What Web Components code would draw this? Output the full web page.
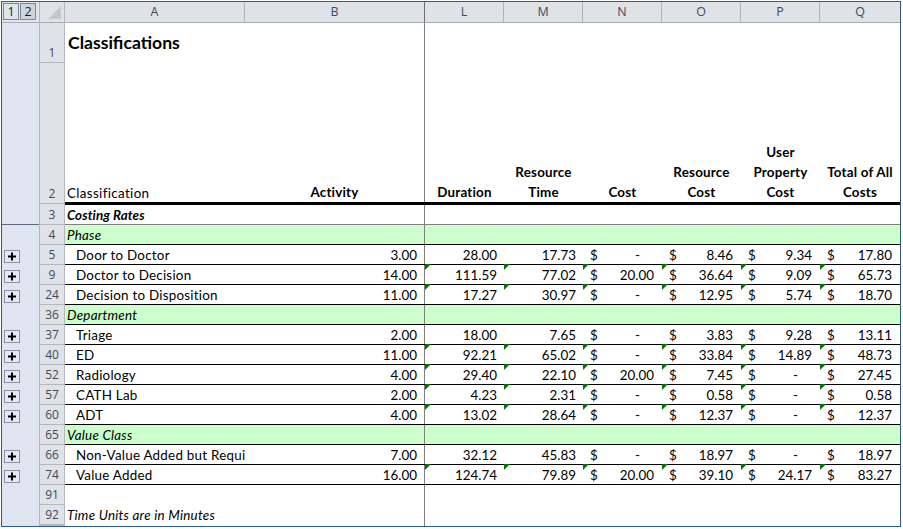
<!DOCTYPE html>
<html>
<head>
<meta charset="utf-8">
<title>Classifications</title>
<style>
  html, body { margin: 0; padding: 0; background: #fff; }
  body { font-family: Lato, "Liberation Sans", sans-serif; font-size: 13.4px; color: #000; }
</style>
</head>
<body>
<xl-sheet>
  <xl-colhead></xl-colhead>
  <xl-row num="1" h="40" kind="title" noline>Classifications</xl-row>
  <xl-row num="2" h="141" kind="head" noline activity="Activity" vals="Duration|Resource/Time|Cost|Resource/Cost|User/Property/Cost|Total of All/Costs">Classification</xl-row>
  <xl-row num="3" h="21" kind="rates" freeze>Costing Rates</xl-row>
  <xl-row num="4" kind="group">Phase</xl-row>
  <xl-row num="5" kind="sub" plus activity="3.00" vals="28.00|17.73|-|8.46|9.34|17.80">Door to Doctor</xl-row>
  <xl-row num="9" kind="sub" plus flag activity="14.00" vals="111.59|77.02|20.00|36.64|9.09|65.73">Doctor to Decision</xl-row>
  <xl-row num="24" kind="sub" plus flag activity="11.00" vals="17.27|30.97|-|12.95|5.74|18.70">Decision to Disposition</xl-row>
  <xl-row num="36" kind="group">Department</xl-row>
  <xl-row num="37" kind="sub" plus activity="2.00" vals="18.00|7.65|-|3.83|9.28|13.11">Triage</xl-row>
  <xl-row num="40" kind="sub" plus flag activity="11.00" vals="92.21|65.02|-|33.84|14.89|48.73">ED</xl-row>
  <xl-row num="52" kind="sub" plus flag activity="4.00" vals="29.40|22.10|20.00|7.45|-|27.45">Radiology</xl-row>
  <xl-row num="57" kind="sub" plus flag activity="2.00" vals="4.23|2.31|-|0.58|-|0.58">CATH Lab</xl-row>
  <xl-row num="60" kind="sub" plus flag activity="4.00" vals="13.02|28.64|-|12.37|-|12.37">ADT</xl-row>
  <xl-row num="65" kind="group">Value Class</xl-row>
  <xl-row num="66" kind="sub" plus activity="7.00" vals="32.12|45.83|-|18.97|-|18.97">Non-Value Added but Required</xl-row>
  <xl-row num="74" kind="sub" plus flag activity="16.00" vals="124.74|79.89|20.00|39.10|24.17|83.27">Value Added</xl-row>
  <xl-row num="91" noline></xl-row>
  <xl-row num="92" kind="note" noline>Time Units are in Minutes</xl-row>
  <xl-row h="1" noline></xl-row>
</xl-sheet>

<script>
const COLS = "180px 180px 79px 79px 79px 79px 79px 80px";

class XlSheet extends HTMLElement {
  constructor() {
    super();
    this.attachShadow({ mode: "open" });
    this.shadowRoot.innerHTML = `
      <style>
        :host {
          display: block;
          width: 898px;
          margin: 1px 0 0 1px;
          border: 1px solid #2b5a8e;
          overflow: hidden;
        }
      </style>
      <slot></slot>`;
  }
}

class XlColhead extends HTMLElement {
  constructor() {
    super();
    this.attachShadow({ mode: "open" });
    const letters = ["A", "B", "L", "M", "N", "O", "P", "Q"];
    this.shadowRoot.innerHTML = `
      <style>
        :host {
          display: flex;
          height: 21px;
          font-family: "Open Sans", sans-serif;
          font-size: 12.5px;
          color: #3f4a58;
        }
        .levels {
          box-sizing: border-box;
          width: 37px;
          display: flex;
          gap: 1px;
          padding: 1px 0 0 1px;
          background: #dfe3ea;
          border-bottom: 1px solid #a9adb3;
        }
        .levels span {
          box-sizing: border-box;
          width: 16px;
          height: 17px;
          border: 1px solid #7f8896;
          text-align: center;
          line-height: 15px;
          color: #222;
        }
        .levels span + span { background: #cfd3da; }
        .corner {
          box-sizing: border-box;
          width: 26px;
          background: #dfe2e7;
          border-left: 1px solid #b4b8bd;
          border-right: 1px solid #b4b8bd;
          border-bottom: 1px solid #a9adb3;
          display: flex;
          justify-content: flex-end;
          align-items: flex-end;
          padding: 0 3px 3px 0;
        }
        .cols {
          display: grid;
          grid-template-columns: ${COLS};
          flex: 1;
        }
        .cols div {
          background: #dfe2e7;
          border-right: 1px solid #b0b4b9;
          border-bottom: 1px solid #a9adb3;
          text-align: center;
          line-height: 20px;
        }
        .cols div:nth-child(2) { border-right-color: #6e6e6e; }
        .cols div:last-child { border-right: 0; }
      </style>
      <div class="levels"><span>1</span><span>2</span></div>
      <div class="corner">
        <svg width="13" height="13" viewBox="0 0 13 13"><polygon points="13,0 13,13 0,13" fill="#c4c8cd"/></svg>
      </div>
      <div class="cols">${letters.map(l => `<div>${l}</div>`).join("")}</div>`;
  }
}

class XlCell extends HTMLElement {
  constructor() {
    super();
    this.attachShadow({ mode: "open" });
    this.shadowRoot.innerHTML = `
      <style>
        :host {
          display: flex;
          position: relative;
          box-sizing: border-box;
          align-items: center;
          justify-content: flex-end;
          white-space: nowrap;
          padding-right: 7px;
        }
        :host([money]) {
          justify-content: space-between;
          padding-left: 7px;
          padding-right: 8px;
        }
        :host([dash]) { padding-right: 22px; }
        :host([flag])::before {
          content: "";
          position: absolute;
          left: 0;
          top: -1px;
          width: 6px;
          height: 6px;
          background: #06700a;
          clip-path: polygon(0 0, 100% 0, 0 100%);
        }
        .sign { display: none; }
        :host([money]) .sign { display: inline; }
      </style>
      <span class="sign">$</span><span><slot></slot></span>`;
  }
}

class XlRow extends HTMLElement {
  constructor() {
    super();
    this.attachShadow({ mode: "open" });
  }
  connectedCallback() {
    const h = this.getAttribute("h") || 20;
    const num = this.getAttribute("num") || "";
    const activity = this.getAttribute("activity") || "";
    const isHead = this.getAttribute("kind") === "head";
    const flag = this.hasAttribute("flag");
    const vals = (this.getAttribute("vals") || "").split("|").filter(Boolean);
    let cells = `<div class="colb"></div>`;
    if (isHead) {
      cells = `<div class="hd colb">${activity}</div>` + vals.map(v =>
        `<div class="hd">${v.split("/").map(t => `<div>${t}</div>`).join("")}</div>`).join("");
    } else if (vals.length) {
      cells = `<xl-cell class="colb">${activity}</xl-cell>` + vals.map((v, i) => {
        const attrs = (flag ? " flag" : "") + (i >= 2 ? " money" : "") + (v === "-" ? " dash" : "");
        return `<xl-cell${attrs}>${v}</xl-cell>`;
      }).join("");
    }
    const plus = this.hasAttribute("plus") ? `
      <svg class="plus" width="16" height="13" viewBox="0 0 16 13">
        <rect x=".5" y=".5" width="15" height="12" fill="#e4e8f2" stroke="#8a93a3"/>
        <path d="M4 6.5h8M8 2.5v8" stroke="#000" stroke-width="2"/>
      </svg>` : "";
    this.shadowRoot.innerHTML = `
      <style>
        :host {
          display: flex;
          height: ${h}px;
          font-style: normal;
        }
        :host([kind=title]) { font-size: 17.6px; font-weight: 700; }
        :host([kind=rates]) { font-weight: 700; font-style: italic; }
        :host([kind=group]), :host([kind=note]) { font-style: italic; }
        .gutter {
          box-sizing: border-box;
          width: 37px;
          flex: none;
          background: #dfe5f0;
          display: flex;
          align-items: flex-end;
          padding: 0 0 2px 2px;
        }
        :host([freeze]) .gutter { border-bottom: 1px solid #5d6b80; }
        .plus { display: block; }
        .num {
          box-sizing: border-box;
          width: 26px;
          flex: none;
          background: #dfe2e7;
          border-left: 1px solid #b4b8bd;
          border-right: 1px solid #b4b8bd;
          border-bottom: 1px solid #b4b8bd;
          font: 12px/18px "Open Sans", sans-serif;
          color: #3f4a58;
          overflow: hidden;
          display: flex;
          align-items: flex-end;
          justify-content: center;
        }
        .cells {
          flex: 1;
          box-sizing: border-box;
          display: grid;
          grid-template-columns: ${COLS};
          grid-template-rows: minmax(0, 1fr);
          border-bottom: 1px solid #000;
          min-width: 0;
        }
        :host([noline]) .cells { border-bottom: 0; }
        :host([freeze]) .cells { border-bottom-color: #7f7f7f; border-top: 1px solid #000; }
        :host([kind=head]) .cells { border-bottom: 2px solid #000; }
        :host([kind=group]) .cells { background: #ccffcc; }
        .label {
          overflow: hidden;
          white-space: nowrap;
          padding-left: 2px;
          display: flex;
          align-items: center;
          letter-spacing: .24px;
        }
        :host([kind=rates]) .label { letter-spacing: .05px; }
        :host([kind=sub]) .label { padding-left: 11px; }
        :host([kind=title]) .label { align-items: flex-start; padding: 9px 0 0 3px; letter-spacing: 0; }
        :host([kind=head]) .label { align-items: flex-end; padding-bottom: 1px; letter-spacing: .35px; }
        .colb { border-right: 1px solid #7f7f7f; }
        .hd {
          font-weight: 700;
          text-align: center;
          line-height: 20px;
          letter-spacing: .2px;
          display: flex;
          flex-direction: column;
          justify-content: flex-end;
        }
      </style>
      <div class="gutter">${plus}</div>
      <div class="num">${num}</div>
      <div class="cells">
        <div class="label"><slot></slot></div>
        ${cells}
      </div>`;
  }
}

customElements.define("xl-sheet", XlSheet);
customElements.define("xl-colhead", XlColhead);
customElements.define("xl-cell", XlCell);
customElements.define("xl-row", XlRow);
</script>
</body>
</html>
